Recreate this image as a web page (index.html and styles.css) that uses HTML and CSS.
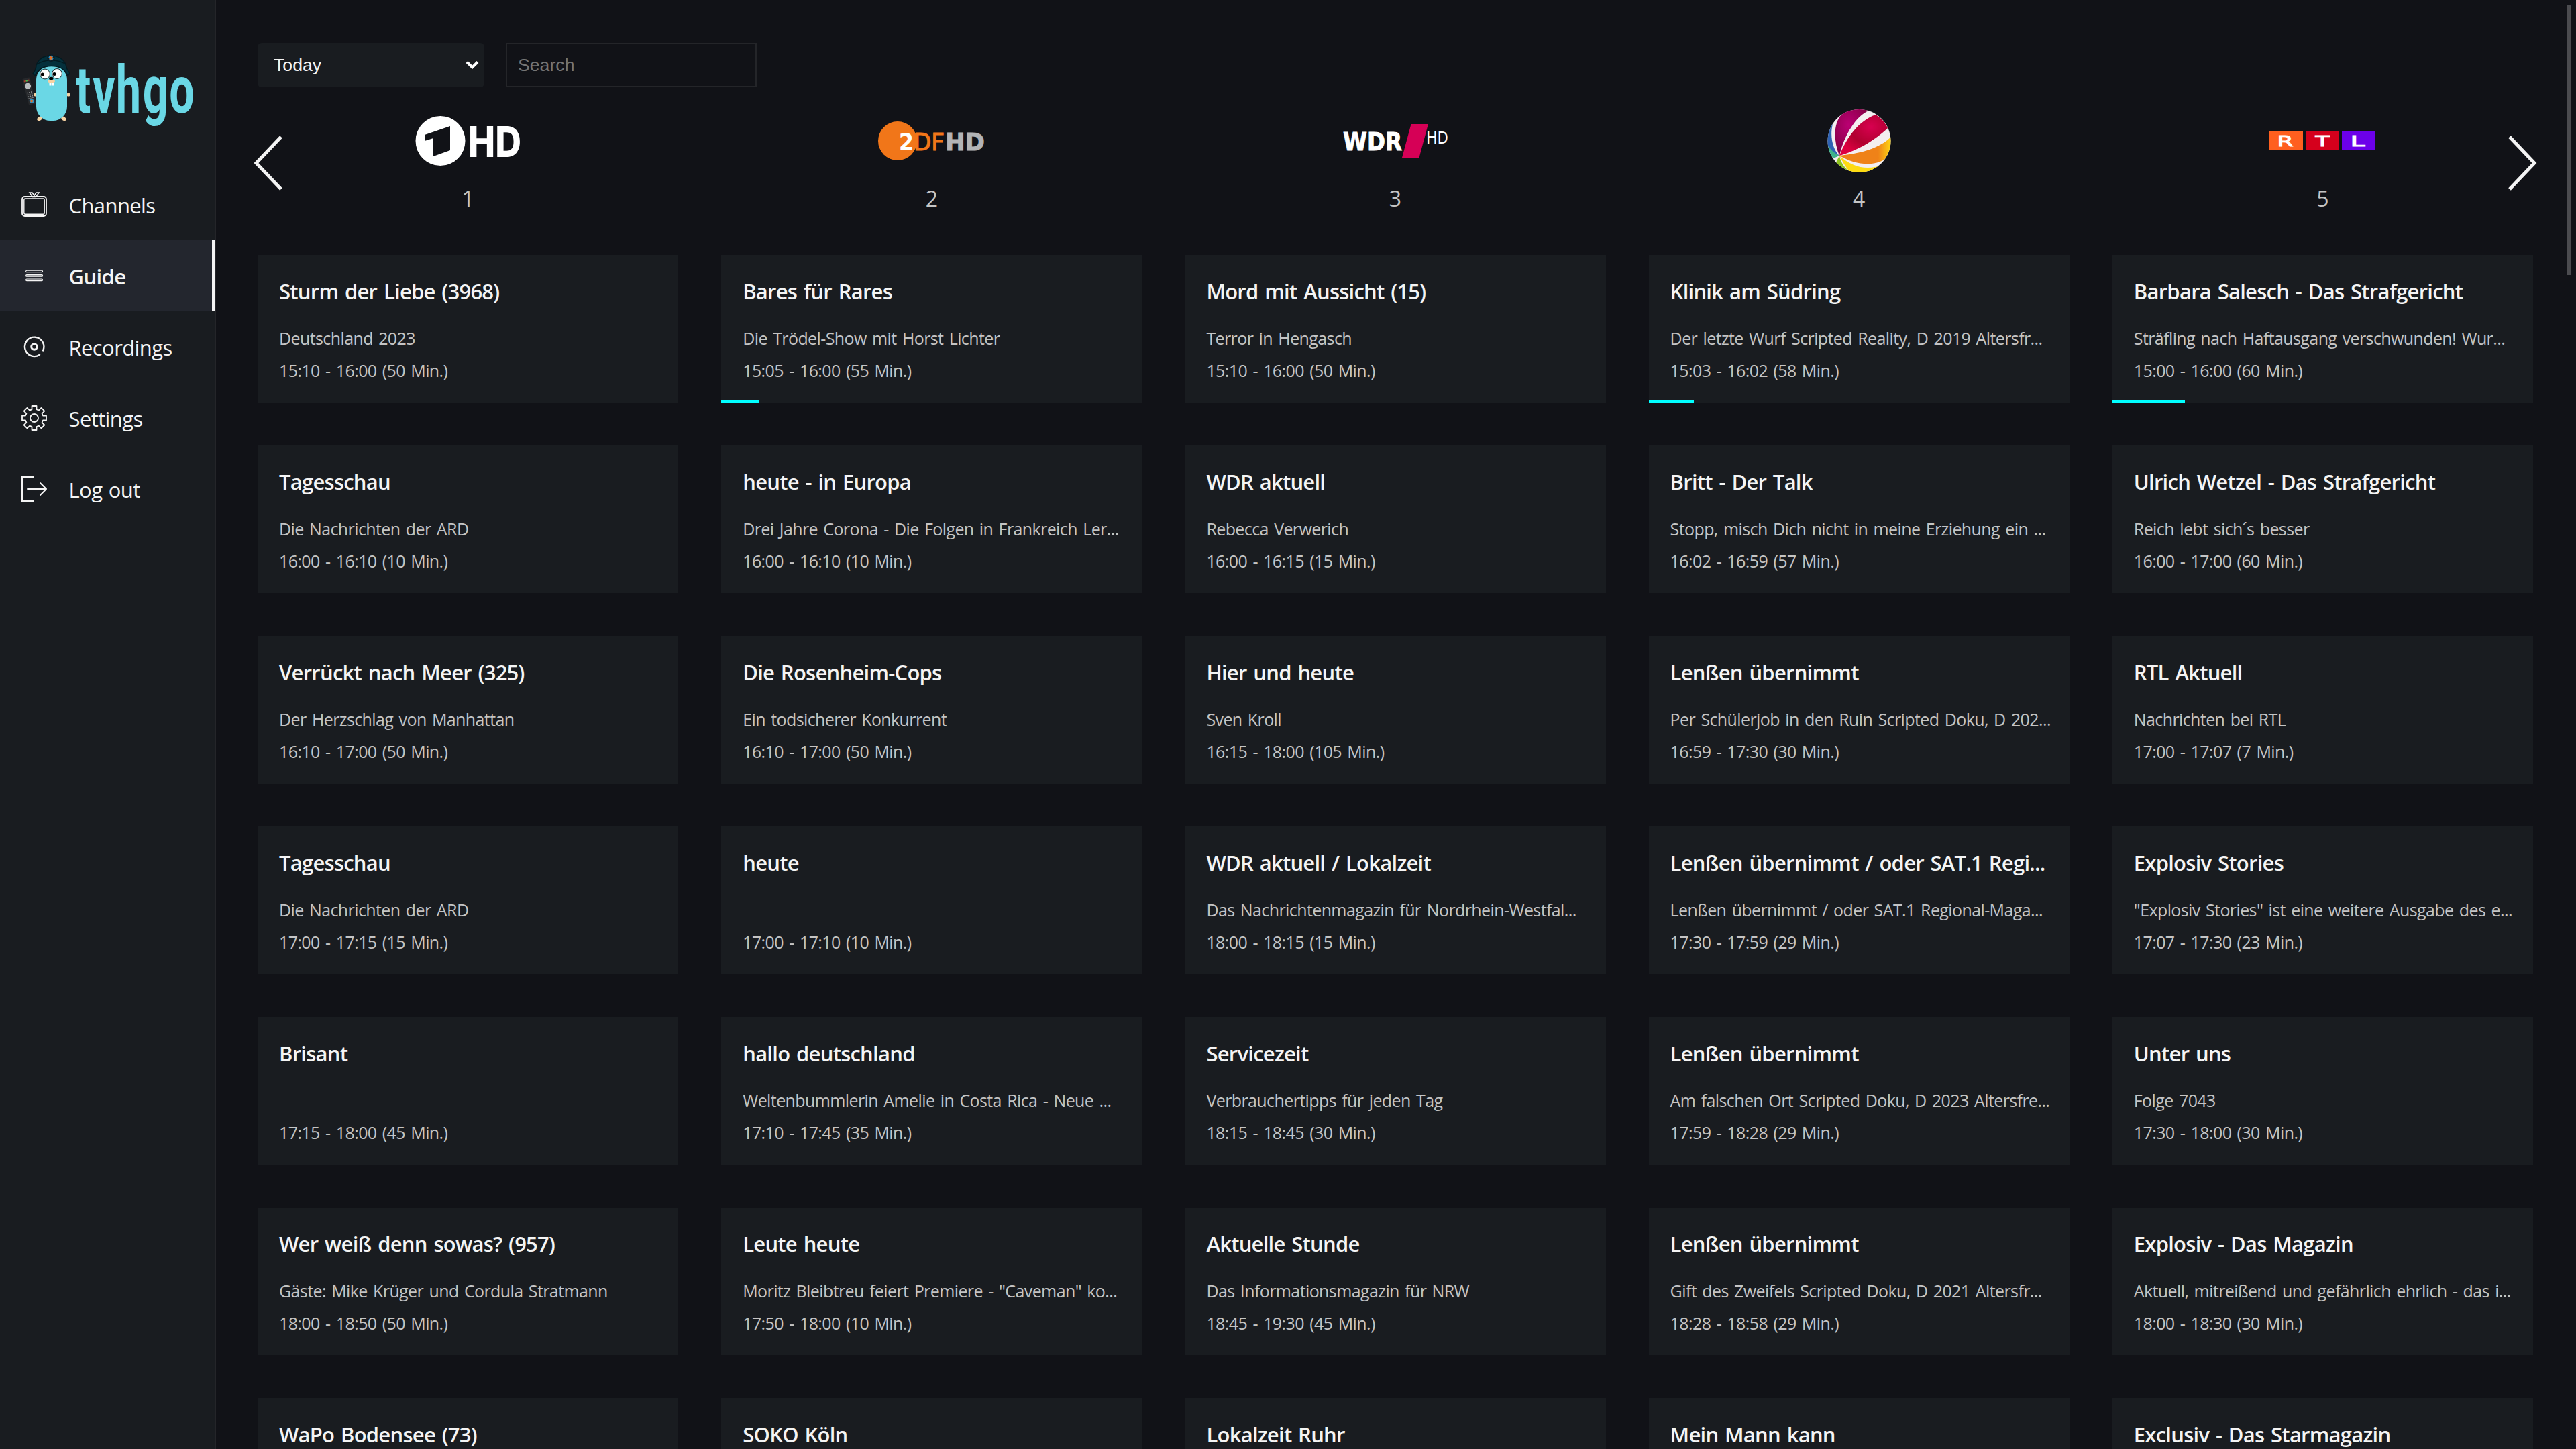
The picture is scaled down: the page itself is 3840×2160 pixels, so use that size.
FILE: index.html
```html
<!DOCTYPE html>
<html lang="de">
<head>
<meta charset="utf-8">
<title>tvhgo</title>
<link rel="stylesheet" href="styles.css">
</head>
<body>
<nav class="sidebar">
  <svg class="brand" viewBox="0 0 320 160">
    <g transform="translate(43.500 76) rotate(-14)"><rect x="-5.500" y="-20" width="11" height="40" rx="1" fill="#26282b"/><path d="M-4-16h8" stroke="#a33a2c" stroke-width="2"/><path d="M-1-16h3" stroke="#3bb54a" stroke-width="2"/><circle cy="-8" r="4.500" fill="#b9bcbe"/><path d="M-3 1v10M0 1v10M3 1v10" stroke="#8d9194" stroke-width="1.600" stroke-dasharray="1.500 1.500"/><circle cy="15" r="2.600" fill="#e0712a" stroke="#2a8fc6" stroke-width="1.500"/></g>
    <g fill="#f6d2a2"><circle cx="53" cy="81" r="2.600"/><circle cx="102" cy="81" r="2.600"/><ellipse cx="59" cy="117" rx="4" ry="2.800" transform="rotate(-35 59 117)"/><ellipse cx="95" cy="117" rx="4" ry="2.800" transform="rotate(35 95 117)"/></g>
    <rect x="54" y="38" width="46" height="82" rx="21" fill="#6ad7e5"/>
    <path d="M49 50C52 46 54 42 54 37C58 27 67 23 76 23S94 27 98 36C99 42 101 46 104 49L101 53C96 42 88 38.500 76.500 38.500S57 43 52 53Z" fill="#04303c" stroke="#031a21" stroke-width="1.500"/>
    <path d="M55 36C66 28 87 28 98 36" fill="none" stroke="#031a21" stroke-width="1.500"/>
    <circle cx="76" cy="26.500" r="5.700" fill="#0a1d27"/><circle cx="76" cy="26.500" r="2.800" fill="#e0712a" stroke="#2a8fc6" stroke-width="1.800" stroke-dasharray="2.400 2"/>
    <g fill="#fff" stroke="#12262b" stroke-width="1"><circle cx="67" cy="50.500" r="7.400"/><circle cx="85" cy="50" r="7.400"/></g>
    <circle cx="63.300" cy="51" r="2.500" fill="#000"/><circle cx="81" cy="50.500" r="2.500" fill="#000"/>
    <rect x="73.500" y="61" width="3" height="6.500" fill="#fff"/><rect x="77" y="61" width="3" height="6.500" fill="#fff"/>
    <ellipse cx="76.500" cy="61" rx="5.500" ry="2.300" fill="#f6d2a2"/><ellipse cx="76.300" cy="57" rx="3.300" ry="2.200" fill="#000"/>
    <text class="brand-text" transform="translate(0 108) scale(.68 1)" x="166 203 254 313 371">tvhgo</text>
  </svg>
  <ul class="menu">
    <li class="item"><svg class="icon" viewBox="0 0 38 38"><g fill="none" stroke="#f4f4f4"><rect x="1" y="7" width="36" height="29" rx="4" stroke-width="1.800"/><rect x="3.800" y="10" width="30.400" height="23.200" rx="2" stroke-width="1.400"/><path d="M12 1h4l3 4.500L22 1h4l-4.500 6.500h-5z" stroke-width="1.500"/></g></svg><span>Channels</span></li>
    <li class="item active"><svg class="icon" viewBox="0 0 38 38"><g fill="#8a8c90" stroke="#f4f4f4" stroke-width="1.100"><rect x="6.600" y="11.200" width="25" height="2.600" rx="1.300" fill="#23262e"/><rect x="6.600" y="17.600" width="25" height="2.600" rx="1.300"/><rect x="6.600" y="24" width="25" height="2.600" rx="1.300" fill="#23262e"/></g></svg><span>Guide</span></li>
    <li class="item"><svg class="icon" viewBox="0 0 38 38"><g fill="none" stroke="#f4f4f4"><path d="M32.200 24.500A14.200 14.200 0 1 0 27 30.700" stroke-width="2.400" stroke-linecap="round"/><circle cx="19" cy="19" r="4.300" stroke-width="3"/></g></svg><span>Recordings</span></li>
    <li class="item"><svg class="icon" viewBox="0 0 38 38"><g fill="none" stroke="#f4f4f4" stroke-width="1.800" stroke-linejoin="round"><circle cx="19" cy="19" r="6"/><path d="M15.500 1h7v5.200l3.300 1.400 3.700-3.700 4.800 4.800-3.700 3.700 1.400 3.100H37v7h-5l-1.400 3.300 3.700 3.700-4.800 4.800-3.700-3.700-3.300 1.400v5h-7v-5l-3.300-1.400-3.700 3.700-4.800-4.800 3.700-3.700L6 22.500H1v-7h5l1.400-3.100-3.700-3.700 4.800-4.800 3.700 3.700 3.300-1.400z"/></g></svg><span>Settings</span></li>
    <li class="item"><svg class="icon" viewBox="0 0 38 38"><g fill="none" stroke="#f4f4f4" stroke-width="2"><path d="M19 1H1v36h18"/><path d="M9 19h28M28 10l9 9-9 9" stroke-linecap="round"/></g></svg><span>Log out</span></li>
  </ul>
</nav>
<main class="guide">
  <div class="filters">
    <div class="select"><span>Today</span><svg class="caret" viewBox="0 0 20 14"><path d="M2 2.500l8 8 8-8" fill="none" stroke="#fff" stroke-width="4"/></svg></div>
    <input class="search" type="text" placeholder="Search">
  </div>
  <header class="channels">
    <svg class="arrow prev" viewBox="0 0 44 82"><path d="M41 2L4 41l37 39" fill="none" stroke="#f4f4f4" stroke-width="5"/></svg>
    <div class="channel"><svg class="logo" viewBox="0 0 160 96"><circle cx="38.500" cy="48" r="37" fill="#fff"/><path d="M15 39L53 26v36L28 71V44L15 48z" fill="#111217"/><text class="ard" x="80" y="71.500" textLength="79" lengthAdjust="spacingAndGlyphs">HD</text></svg><span>1</span></div>
    <div class="channel"><svg class="logo" viewBox="0 0 160 96"><circle cx="29" cy="48" r="29" fill="#f17619"/><text class="zdf thin" x="53" y="61.500" textLength="46" lengthAdjust="spacingAndGlyphs">DF</text><text class="zdf two" x="31" y="61.500" textLength="22" lengthAdjust="spacingAndGlyphs">2</text><text class="zdf hd" x="100" y="61.500" textLength="59" lengthAdjust="spacingAndGlyphs">HD</text></svg><span>2</span></div>
    <div class="channel"><svg class="logo" viewBox="0 0 160 96"><text class="wdr" x="2" y="61.500" textLength="88" lengthAdjust="spacingAndGlyphs">WDR</text><path d="M103.500 23H129l-13.500 50H90z" fill="#d60056"/><text class="wdr-hd" x="126" y="52" textLength="33" lengthAdjust="spacingAndGlyphs">HD</text></svg><span>3</span></div>
    <div class="channel"><svg class="logo" viewBox="0 0 160 96">
      <defs><clipPath id="ball"><circle cx="80.500" cy="48" r="47"/></clipPath>
      <radialGradient id="magenta" cx=".4" cy=".35" r=".6"><stop offset="0" stop-color="#bb0073"/><stop offset="1" stop-color="#860046"/></radialGradient>
      <radialGradient id="red" cx=".65" cy=".3" r=".7"><stop offset="0" stop-color="#d80050"/><stop offset=".6" stop-color="#b0002f"/><stop offset="1" stop-color="#dc0040"/></radialGradient>
      <linearGradient id="gold" x1="0" x2="1"><stop offset=".75" stop-color="#ef8218"/><stop offset="1" stop-color="#ffd713"/></linearGradient></defs>
      <g clip-path="url(#ball)"><rect x="30" width="100" height="96" fill="#f3eef0"/>
      <path d="M51 70C42 48 42 22 54 9C68-2 84-2 95 3C76 10 58 40 51 70z" fill="url(#magenta)"/>
      <path d="M51 70C62 42 80 18 105 9C114 14 120 22 123 29C105 46 80 62 51 70z" fill="url(#red)"/>
      <path d="M51 70C85 67 112 58 128 42V60L118 76C100 86 75 84 51 70z" fill="url(#gold)"/>
      <path d="M51 70C70 87 90 92 112 85L90 98H70C62 90 56 80 51 70z" fill="#fddb12"/>
      <path d="M51 70C53 80 58 88 66 93L58 92 46 80z" fill="#8fc31f"/>
      <path d="M51 70C45 66 37 60 33 54V62L42 74z" fill="#3fb28a"/>
      <path d="M51 70C42 62 36 42 41 23L30 30V50C36 60 43 66 51 70z" fill="#2e62b3"/></g></svg><span>4</span></div>
    <div class="channel"><svg class="logo" viewBox="0 0 160 96"><path d="M1 34h50v28H1z" fill="#ff5f1f"/><path d="M55 34h50v28H55z" fill="#d5001c"/><path d="M109 34h50v28h-50z" fill="#6c00ea"/><g class="rtl"><text x="12.500" y="55.700" textLength="24" lengthAdjust="spacingAndGlyphs">R</text><text x="69.500" y="55.700" textLength="21" lengthAdjust="spacingAndGlyphs">T</text><text x="121.500" y="55.700" textLength="22" lengthAdjust="spacingAndGlyphs">L</text></g></svg><span>5</span></div>
    <svg class="arrow next" viewBox="0 0 44 82"><path d="M3 2l37 39L3 80" fill="none" stroke="#f4f4f4" stroke-width="5"/></svg>
  </header>
  <section class="grid">
    <article class="card"><h2>Sturm der Liebe (3968)</h2><p>Deutschland 2023</p><p>15:10 - 16:00 (50 Min.)</p></article>
    <article class="card"><h2>Bares für Rares</h2><p>Die Trödel-Show mit Horst Lichter</p><p>15:05 - 16:00 (55 Min.)</p><i class="progress" style="width:9%"></i></article>
    <article class="card"><h2>Mord mit Aussicht (15)</h2><p>Terror in Hengasch</p><p>15:10 - 16:00 (50 Min.)</p></article>
    <article class="card"><h2>Klinik am Südring</h2><p>Der letzte Wurf Scripted Reality, D 2019 Altersfr...</p><p>15:03 - 16:02 (58 Min.)</p><i class="progress" style="width:10.8%"></i></article>
    <article class="card"><h2>Barbara Salesch - Das Strafgericht</h2><p>Sträfling nach Haftausgang verschwunden! Wur...</p><p>15:00 - 16:00 (60 Min.)</p><i class="progress" style="width:17.2%"></i></article>

    <article class="card"><h2>Tagesschau</h2><p>Die Nachrichten der ARD</p><p>16:00 - 16:10 (10 Min.)</p></article>
    <article class="card"><h2>heute - in Europa</h2><p>Drei Jahre Corona - Die Folgen in Frankreich Ler...</p><p>16:00 - 16:10 (10 Min.)</p></article>
    <article class="card"><h2>WDR aktuell</h2><p>Rebecca Verwerich</p><p>16:00 - 16:15 (15 Min.)</p></article>
    <article class="card"><h2>Britt - Der Talk</h2><p>Stopp, misch Dich nicht in meine Erziehung ein ...</p><p>16:02 - 16:59 (57 Min.)</p></article>
    <article class="card"><h2>Ulrich Wetzel - Das Strafgericht</h2><p>Reich lebt sich´s besser</p><p>16:00 - 17:00 (60 Min.)</p></article>

    <article class="card"><h2>Verrückt nach Meer (325)</h2><p>Der Herzschlag von Manhattan</p><p>16:10 - 17:00 (50 Min.)</p></article>
    <article class="card"><h2>Die Rosenheim-Cops</h2><p>Ein todsicherer Konkurrent</p><p>16:10 - 17:00 (50 Min.)</p></article>
    <article class="card"><h2>Hier und heute</h2><p>Sven Kroll</p><p>16:15 - 18:00 (105 Min.)</p></article>
    <article class="card"><h2>Lenßen übernimmt</h2><p>Per Schülerjob in den Ruin Scripted Doku, D 202...</p><p>16:59 - 17:30 (30 Min.)</p></article>
    <article class="card"><h2>RTL Aktuell</h2><p>Nachrichten bei RTL</p><p>17:00 - 17:07 (7 Min.)</p></article>

    <article class="card"><h2>Tagesschau</h2><p>Die Nachrichten der ARD</p><p>17:00 - 17:15 (15 Min.)</p></article>
    <article class="card"><h2>heute</h2><p></p><p>17:00 - 17:10 (10 Min.)</p></article>
    <article class="card"><h2>WDR aktuell / Lokalzeit</h2><p>Das Nachrichtenmagazin für Nordrhein-Westfal...</p><p>18:00 - 18:15 (15 Min.)</p></article>
    <article class="card"><h2>Lenßen übernimmt / oder SAT.1 Regi...</h2><p>Lenßen übernimmt / oder SAT.1 Regional-Maga...</p><p>17:30 - 17:59 (29 Min.)</p></article>
    <article class="card"><h2>Explosiv Stories</h2><p>"Explosiv Stories" ist eine weitere Ausgabe des e...</p><p>17:07 - 17:30 (23 Min.)</p></article>

    <article class="card"><h2>Brisant</h2><p></p><p>17:15 - 18:00 (45 Min.)</p></article>
    <article class="card"><h2>hallo deutschland</h2><p>Weltenbummlerin Amelie in Costa Rica - Neue ...</p><p>17:10 - 17:45 (35 Min.)</p></article>
    <article class="card"><h2>Servicezeit</h2><p>Verbrauchertipps für jeden Tag</p><p>18:15 - 18:45 (30 Min.)</p></article>
    <article class="card"><h2>Lenßen übernimmt</h2><p>Am falschen Ort Scripted Doku, D 2023 Altersfre...</p><p>17:59 - 18:28 (29 Min.)</p></article>
    <article class="card"><h2>Unter uns</h2><p>Folge 7043</p><p>17:30 - 18:00 (30 Min.)</p></article>

    <article class="card"><h2>Wer weiß denn sowas? (957)</h2><p>Gäste: Mike Krüger und Cordula Stratmann</p><p>18:00 - 18:50 (50 Min.)</p></article>
    <article class="card"><h2>Leute heute</h2><p>Moritz Bleibtreu feiert Premiere - "Caveman" ko...</p><p>17:50 - 18:00 (10 Min.)</p></article>
    <article class="card"><h2>Aktuelle Stunde</h2><p>Das Informationsmagazin für NRW</p><p>18:45 - 19:30 (45 Min.)</p></article>
    <article class="card"><h2>Lenßen übernimmt</h2><p>Gift des Zweifels Scripted Doku, D 2021 Altersfr...</p><p>18:28 - 18:58 (29 Min.)</p></article>
    <article class="card"><h2>Explosiv - Das Magazin</h2><p>Aktuell, mitreißend und gefährlich ehrlich - das i...</p><p>18:00 - 18:30 (30 Min.)</p></article>

    <article class="card"><h2>WaPo Bodensee (73)</h2></article>
    <article class="card"><h2>SOKO Köln</h2></article>
    <article class="card"><h2>Lokalzeit Ruhr</h2></article>
    <article class="card"><h2>Mein Mann kann</h2></article>
    <article class="card"><h2>Exclusiv - Das Starmagazin</h2></article>
  </section>
  <div class="scrollbar"></div>
</main>
</body>
</html>
```
FILE: styles.css
```css
* { box-sizing: border-box; }
body {
  margin: 0;
  height: 2160px;
  display: flex;
  overflow: hidden;
  background: #111217;
  color: #f4f4f4;
  font-family: "Open Sans", "Noto Sans", sans-serif;
}
.sidebar {
  flex: none;
  width: 322px;
  height: 100%;
  background: #191c20;
  border-right: 2px solid #242529;
}
.brand { display: block; width: 320px; height: 160px; margin-top: 60px; }
.brand-text { font: 700 98px Roboto, sans-serif; fill: #6ad7e5; }
.menu { list-style: none; margin: 32px 0 0; padding: 0; }
.item {
  display: flex;
  align-items: center;
  height: 106px;
  padding-left: 32px;
  gap: 32px;
  font-size: 31px;
  letter-spacing: -.6px;
  word-spacing: 2px;
}
.item span { padding: 2px 0 0 .5px; }
.item.active { background: #23262e; border-right: 4px solid #f4f4f4; font-weight: 600; }
.icon { width: 38px; height: 38px; }

.guide {
  position: relative;
  flex: 1;
  height: 100%;
  overflow: hidden;
  padding: 64px 64px 0 62px;
}
.filters { display: flex; gap: 32px; height: 66px; font: 26.67px "Liberation Sans", sans-serif; }
.select {
  width: 338px;
  padding: 0 8px 0 24px;
  display: flex;
  align-items: center;
  justify-content: space-between;
  background: #191c20;
  border-radius: 6px;
}
.caret { width: 20px; height: 14px; }
.search {
  width: 374px;
  padding: 0 16px;
  background: transparent;
  border: 2px solid #242529;
  font: inherit;
  color: #f4f4f4;
}
.search::placeholder { color: #757575; opacity: 1; }

.channels, .grid { display: grid; grid-template-columns: repeat(5, 1fr); column-gap: 64px; }
.channels { position: relative; height: 250px; padding-top: 32px; }
.channel { display: flex; flex-direction: column; align-items: center; font-size: 32px; color: #c4c4c4; }
.channel span { line-height: 42px; margin-top: 17px; }
.logo { width: 160px; height: 96px; overflow: visible; }
.arrow { position: absolute; top: 72px; width: 44px; height: 82px; }
.prev { left: -6px; }
.next { right: -6px; }
.ard { font: 800 63px Inter, sans-serif; fill: #fff; }
.zdf { font: 700 36px "DejaVu Sans", sans-serif; }
.zdf.two { fill: #fff; }
.zdf.thin { font-weight: 400; fill: #f17619; stroke: #f17619; stroke-width: 1.2px; }
.zdf.hd { fill: #b3b4b6; stroke: #b3b4b6; stroke-width: 1px; }
.wdr { font: 700 37px "DejaVu Sans", sans-serif; fill: #fff; stroke: #fff; stroke-width: 1px; }
.wdr-hd { font: 25px "Noto Sans", sans-serif; fill: #fff; }
.rtl { font: 400 21px "DejaVu Sans", sans-serif; fill: #fff; stroke: #fff; stroke-width: .9px; }

.grid { grid-auto-rows: 220px; row-gap: 64px; }
.card {
  position: relative;
  min-width: 0;
  padding: 33px 32px 0;
  background: #191c20;
  white-space: nowrap;
}
.card h2 { margin: 0 0 31px; font-size: 31px; line-height: 43px; font-weight: 600; letter-spacing: -.75px; word-spacing: 2.4px; }
.card p { margin: 0 0 14px; height: 34px; font-size: 25px; line-height: 34px; letter-spacing: -.6px; word-spacing: 2.4px; color: #c4c4c4; }
.progress { position: absolute; left: 0; bottom: 0; height: 4px; background: #0ff; }
.scrollbar { position: absolute; top: 8px; right: 8px; width: 6px; height: 402px; background: #4b4b4f; }
```
